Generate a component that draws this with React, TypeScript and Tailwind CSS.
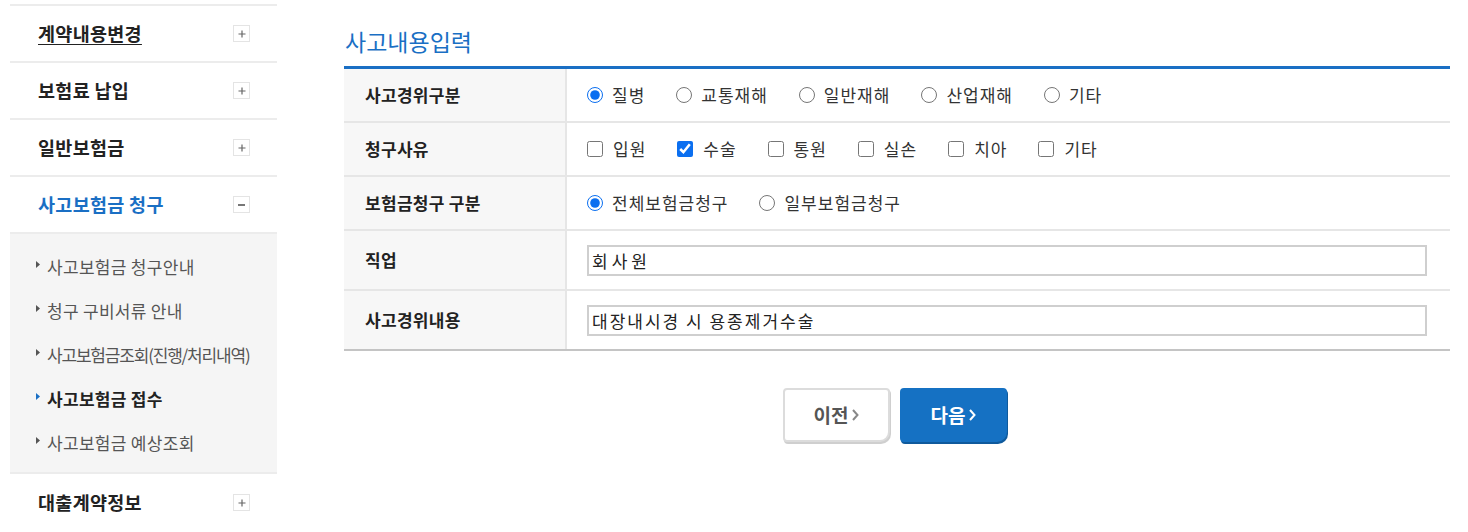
import React from "react";

const font = { fontFamily: '"Noto Sans CJK KR", "Noto Sans", sans-serif' };

const menus = [
  { label: "계약내용변경", underline: true },
  { label: "보험료 납입" },
  { label: "일반보험금" },
];

const subMenus = [
  { label: "사고보험금 청구안내" },
  { label: "청구 구비서류 안내" },
  { label: "사고보험금조회(진행/처리내역)", tight: true },
  { label: "사고보험금 접수", active: true },
  { label: "사고보험금 예상조회" },
];

const ToggleBox = ({ open }: { open?: boolean }) => (
  <span className="flex h-[17px] w-[17px] items-center justify-center border border-[#e4e4e4] bg-white">
    {open ? (
      <span className="h-[2px] w-[7px] bg-[#777]" />
    ) : (
      <svg width="8" height="8" viewBox="0 0 8 8">
        <path d="M4 0.5v7M0.5 4h7" stroke="#666" strokeWidth="1.2" />
      </svg>
    )}
  </span>
);

const Arrow = ({ active }: { active?: boolean }) => (
  <svg width="4" height="7" viewBox="0 0 4 7" className="mb-[6px] mr-[7px] shrink-0">
    <path d="M0 0l4 3.5L0 7z" fill={active ? "#1a6fc4" : "#555"} />
  </svg>
);

const Radio = ({ label, checked, name }: { label: string; checked?: boolean; name: string }) => (
  <label className="flex items-center">
    <input type="radio" name={name} defaultChecked={checked} className="m-0 h-4 w-4 accent-[#0b6ff0]" />
    <span className="ml-[9px] text-[17px] tracking-[1px] text-[#333]">{label}</span>
  </label>
);

const Check = ({ label, checked }: { label: string; checked?: boolean }) => (
  <label className="flex items-center">
    <input type="checkbox" defaultChecked={checked} className="m-0 h-4 w-4 accent-[#0b6ff0]" />
    <span className="ml-[10px] text-[17px] tracking-[1px] text-[#333]">{label}</span>
  </label>
);

const Row = ({ label, tall, last, children }: { label: string; tall?: boolean; last?: boolean; children: React.ReactNode }) => (
  <div className={`flex ${tall ? "h-[60px]" : "h-[54px]"} ${last ? "border-b-2 border-[#c4c4c4]" : "border-b-2 border-[#e6e6e6]"}`}>
    <div className="flex w-[223px] shrink-0 items-center border-r-2 border-[#e6e6e6] bg-[#f7f7f7] pl-[21px] text-[17px] font-bold tracking-[0.3px] text-[#222]">
      {label}
    </div>
    <div className="flex flex-1 items-center pl-[20px] pr-[22px]">{children}</div>
  </div>
);

export default function App() {
  return (
    <div className="flex h-[532px] w-[1468px] overflow-hidden bg-white pl-[10px]" style={font}>
      {/* Sidebar */}
      <aside className="w-[267px] shrink-0 pt-[4px]">
        <div className="border-t-2 border-[#ececec]" />
        {menus.map((m) => (
          <div key={m.label} className="flex h-[57px] items-center justify-between border-b-2 border-[#ececec] pl-[28px] pr-[27px]">
            <span className={`text-[18.5px] font-bold tracking-[0.3px] text-[#222] ${m.underline ? "underline underline-offset-[3px]" : ""}`}>
              {m.label}
            </span>
            <ToggleBox />
          </div>
        ))}
        <div className="flex h-[57px] items-center justify-between border-b-2 border-[#ececec] pl-[28px] pr-[27px]">
          <span className="text-[18.5px] font-bold tracking-[0.3px] text-[#1a6fc4]">사고보험금 청구</span>
          <ToggleBox open />
        </div>
        <div className="border-b-2 border-[#ececec] bg-[#f5f5f5] pb-[7px] pl-[26px] pt-[11px]">
          {subMenus.map((s) => (
            <div key={s.label} className="flex h-[44px] items-center">
              <Arrow active={s.active} />
              <span
                className={`text-[17px] ${s.active ? "font-bold text-[#222]" : "text-[#555]"} ${s.tight ? "tracking-[-0.07em]" : "tracking-[0.3px]"}`}
              >
                {s.label}
              </span>
            </div>
          ))}
        </div>
        <div className="flex h-[57px] items-center justify-between pl-[28px] pr-[27px]">
          <span className="text-[18.5px] font-bold tracking-[0.3px] text-[#222]">대출계약정보</span>
          <ToggleBox />
        </div>
      </aside>

      {/* Main */}
      <main className="ml-[67px] w-[1106px] pt-[24px]">
        <h2 className="mb-[8px] pl-[1px] text-[23px] leading-[34px] text-[#1a6fc4]">사고내용입력</h2>
        <div className="border-t-[3px] border-[#1a6fc4]">
          <Row label="사고경위구분">
            <div className="flex gap-x-[31px]">
              <Radio name="acc" label="질병" checked />
              <Radio name="acc" label="교통재해" />
              <Radio name="acc" label="일반재해" />
              <Radio name="acc" label="산업재해" />
              <Radio name="acc" label="기타" />
            </div>
          </Row>
          <Row label="청구사유">
            <div className="flex gap-x-[31px]">
              <Check label="입원" />
              <Check label="수술" checked />
              <Check label="통원" />
              <Check label="실손" />
              <Check label="치아" />
              <Check label="기타" />
            </div>
          </Row>
          <Row label="보험금청구 구분">
            <div className="flex gap-x-[31px]">
              <Radio name="claim" label="전체보험금청구" checked />
              <Radio name="claim" label="일부보험금청구" />
            </div>
          </Row>
          <Row label="직업" tall>
            <input
              readOnly
              value="회사원"
              className="h-[31px] w-[840px] border-2 border-[#cfcfcf] px-[3px] text-[17px] tracking-[4px] text-[#222] outline-none"
            />
          </Row>
          <Row label="사고경위내용" tall last>
            <input
              readOnly
              value="대장내시경 시 용종제거수술"
              className="h-[31px] w-[840px] border-2 border-[#cfcfcf] px-[3px] text-[17px] tracking-[2px] text-[#222] outline-none"
            />
          </Row>
        </div>

        <div className="mt-[37px] flex justify-center gap-[10px] pr-[4px]">
          <button className="flex h-[54px] w-[107px] items-center justify-center gap-[4px] rounded-[4px] rounded-br-[10px] border-2 border-[#dcdcdc] bg-white text-[19px] font-bold text-[#555] shadow-[1px_2px_0_#cfcfcf]">
            이전
            <svg width="7" height="12" viewBox="0 0 7 12">
              <path d="M1 1l4.5 5L1 11" fill="none" stroke="#888" strokeWidth="2" />
            </svg>
          </button>
          <button className="flex h-[54px] w-[107px] items-center justify-center gap-[4px] rounded-[4px] rounded-br-[10px] bg-[#1571c3] text-[19px] font-bold text-white shadow-[1px_2px_0_#0f5a9c]">
            다음
            <svg width="7" height="12" viewBox="0 0 7 12">
              <path d="M1 1l4.5 5L1 11" fill="none" stroke="#fff" strokeWidth="2" />
            </svg>
          </button>
        </div>
      </main>
    </div>
  );
}
